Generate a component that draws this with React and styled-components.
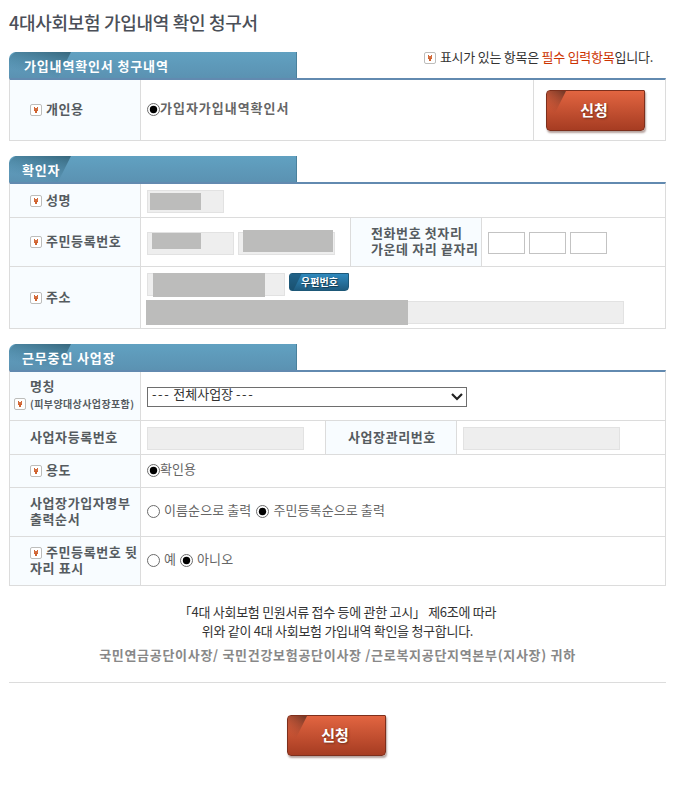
import React, { useState } from 'react';
import styled, { createGlobalStyle, css } from 'styled-components';

function RequiredMark() {
  return (
    <Mark viewBox="0 0 12 12" aria-label="필수">
      <rect x="0.5" y="0.5" width="11" height="11" rx="1.5" fill="#fff" stroke="#bdbdbb" />
      <path d="M4 3H5V4H7V3H8V7H7V9H5V7H4Z" fill="#d0622f" />
      <path d="M4 5H8" stroke="#e39a78" strokeWidth="0.5" />
    </Mark>
  );
}

function SectionHeader({ title, indent }) {
  return (
    <Tab $indent={indent}>
      <TabFold viewBox="0 0 62 26">
        <defs>
          <linearGradient id="tabFold" x1="0.95" y1="0" x2="0.5" y2="0.9">
            <stop offset="0" stopColor="#315f73" stopOpacity="0.85" />
            <stop offset="1" stopColor="#3c7490" stopOpacity="0" />
          </linearGradient>
        </defs>
        <path d="M6 0H62L49 26H0V6Z" fill="url(#tabFold)" />
      </TabFold>
      <TabTitle>{title}</TabTitle>
    </Tab>
  );
}

function SubmitButton() {
  return (
    <RedButton type="button">
      <ButtonFold viewBox="0 0 20 24">
        <defs>
          <linearGradient id="redFold" x1="0.8" y1="0" x2="0.3" y2="0.9">
            <stop offset="0" stopColor="#7a3a28" />
            <stop offset="1" stopColor="#a54830" stopOpacity="0" />
          </linearGradient>
        </defs>
        <path d="M0 0H19L7 24H0Z" fill="url(#redFold)" />
      </ButtonFold>
      <ButtonText>신청</ButtonText>
    </RedButton>
  );
}

function RadioItem({ label, bold, gap, checked, onChange }) {
  return (
    <RadioLabel $gap={gap}>
      <HiddenRadio type="radio" checked={checked} onChange={onChange} />
      <Circle viewBox="0 0 13 13">
        <circle cx="6.5" cy="6.5" r="6" fill="#fff" stroke="#6b6b6b" strokeWidth="1" />
        {checked && <circle cx="6.5" cy="6.5" r="3.7" fill="#000" />}
      </Circle>
      <RadioText $bold={bold}>{label}</RadioText>
    </RadioLabel>
  );
}

function App() {
  const [order, setOrder] = useState('number');
  const [showBack, setShowBack] = useState('no');

  return (
    <Page>
      <GlobalStyle />
      <Top>
        <PageTitle>4대사회보험 가입내역 확인 청구서</PageTitle>
      </Top>

      <Section>
        <HeaderLine>
          <SectionHeader title="가입내역확인서 청구내역" indent={15} />
          <Notice>
            <RequiredMark />
            <NoticeText>
              표시가 있는 항목은 <Red>필수 입력항목</Red>입니다.
            </NoticeText>
          </Notice>
        </HeaderLine>
        <Panel>
          <Row $height={61}>
            <Label>
              <LabelText><RequiredMark />개인용</LabelText>
            </Label>
            <Value>
              <RadioItem label="가입자가입내역확인서" bold checked onChange={() => {}} />
            </Value>
            <ButtonCell>
              <SubmitButton />
            </ButtonCell>
          </Row>
        </Panel>
      </Section>

      <Section>
        <SectionHeader title="확인자" indent={13} />
        <Panel>
          <Row $height={34}>
            <Label>
              <LabelText><RequiredMark />성명</LabelText>
            </Label>
            <FieldValue>
              <Field $width={77}>
                <Mask $left={3} $top={3} $width={51} $height={17} />
              </Field>
            </FieldValue>
          </Row>
          <Row $height={49}>
            <Label>
              <LabelText><RequiredMark />주민등록번호</LabelText>
            </Label>
            <FieldValue $width={209} $gap={4}>
              <Field $width={87}>
                <Mask $left={5} $top={1} $width={49} $height={16} />
              </Field>
              <Field $width={97}>
                <Mask $left={5} $top={-2} $width={90} $height={22} />
              </Field>
            </FieldValue>
            <Label $inner $indent={20}>
              <LabelText>전화번호 첫자리<br />가운데 자리 끝자리</LabelText>
            </Label>
            <FieldValue $gap={4}>
              <PhoneInput />
              <PhoneInput />
              <PhoneInput />
            </FieldValue>
          </Row>
          <Row $height={62}>
            <Label>
              <LabelText><RequiredMark />주소</LabelText>
            </Label>
            <AddressValue>
              <AddressLine>
                <Field $width={138}>
                  <Mask $left={6} $top={0} $width={112} $height={24} />
                </Field>
                <PostcodeButton type="button">
                  <PostcodeFold viewBox="0 0 14 18">
                    <path d="M0 0H13L4 18H0Z" fill="#174965" opacity="0.6" />
                  </PostcodeFold>
                  <PostcodeText>우편번호</PostcodeText>
                </PostcodeButton>
              </AddressLine>
              <Field $width={477}>
                <Mask $left={-1} $top={-1} $width={262} $height={25} />
              </Field>
            </AddressValue>
          </Row>
        </Panel>
      </Section>

      <Section>
        <SectionHeader title="근무중인 사업장" indent={13} />
        <Panel>
          <Row $height={49}>
            <NameLabel>
              <LabelText>명칭</LabelText>
              <SubLine>
                <RequiredMark />
                <SubText>(피부양대상사업장포함)</SubText>
              </SubLine>
            </NameLabel>
            <Value>
              <SelectBox role="listbox" tabIndex={0}>
                <SelectText>
                  <Dashes>---</Dashes> 전체사업장 <Dashes>---</Dashes>
                </SelectText>
                <Arrow viewBox="0 0 12 8">
                  <path d="M1 1L6 6L11 1" fill="none" stroke="#222" strokeWidth="2.2" />
                </Arrow>
              </SelectBox>
            </Value>
          </Row>
          <Row $height={34}>
            <Label>
              <LabelText>사업자등록번호</LabelText>
            </Label>
            <FieldValue $width={184}>
              <Field $width={157} />
            </FieldValue>
            <Label $inner $indent={22}>
              <LabelText>사업장관리번호</LabelText>
            </Label>
            <FieldValue>
              <Field $width={157} />
            </FieldValue>
          </Row>
          <Row $height={33}>
            <Label>
              <LabelText><RequiredMark />용도</LabelText>
            </Label>
            <Value>
              <RadioItem label="확인용" checked onChange={() => {}} />
            </Value>
          </Row>
          <Row $height={49}>
            <Label>
              <LabelText>사업장가입자명부<br />출력순서</LabelText>
            </Label>
            <Value $gap={5}>
              <RadioItem
                label="이름순으로 출력"
                gap={4}
                checked={order === 'name'}
                onChange={() => setOrder('name')}
              />
              <RadioItem
                label="주민등록순으로 출력"
                gap={4}
                checked={order === 'number'}
                onChange={() => setOrder('number')}
              />
            </Value>
          </Row>
          <Row $height={49}>
            <Label>
              <LabelText><RequiredMark />주민등록번호 뒷<br />자리 표시</LabelText>
            </Label>
            <Value $gap={4}>
              <RadioItem
                label="예"
                gap={4}
                checked={showBack === 'yes'}
                onChange={() => setShowBack('yes')}
              />
              <RadioItem
                label="아니오"
                gap={4}
                checked={showBack === 'no'}
                onChange={() => setShowBack('no')}
              />
            </Value>
          </Row>
        </Panel>
      </Section>

      <Closing>
        <ClosingText>「4대 사회보험 민원서류 접수 등에 관한 고시」 제6조에 따라</ClosingText>
        <ClosingText>위와 같이 4대 사회보험 가입내역 확인을 청구합니다.</ClosingText>
        <Receiver>국민연금공단이사장/ 국민건강보험공단이사장 /근로복지공단지역본부(지사장) 귀하</Receiver>
      </Closing>
      <BottomArea>
        <SubmitButton />
      </BottomArea>
    </Page>
  );
}

const GlobalStyle = createGlobalStyle`
  * {
    box-sizing: border-box;
  }

  body {
    margin: 0;
    background: #fff;
    color: #666;
    font-family: 'Noto Sans CJK KR', sans-serif;
    font-size: 13px;
    line-height: 16px;
  }
`;

const Page = styled.div`
  width: 689px;
  height: 785px;
  padding: 0 23px 0 9px;
  overflow: hidden;
  white-space: nowrap;
`;

const Top = styled.header`
  height: 52px;
  padding-top: 10px;
`;

const PageTitle = styled.h1`
  margin: 0;
  color: #4b4f58;
  font-size: 18px;
  font-weight: 500;
  line-height: 24px;
  letter-spacing: -0.3px;
`;

const Section = styled.section`
  margin-bottom: 15px;
`;

const HeaderLine = styled.div`
  display: flex;
  justify-content: space-between;
`;

const Tab = styled.div`
  display: flex;
  position: relative;
  align-items: center;
  width: 288px;
  height: 26px;
  padding: 1px 0 0 ${({ $indent }) => $indent}px;
  overflow: hidden;
  border-right: 1px solid #4a819c;
  border-radius: 7px 0 0 0;
  background: linear-gradient(#61a1c1, #5b92b2);
`;

const TabFold = styled.svg`
  position: absolute;
  top: 0;
  left: 0;
  width: 62px;
  height: 26px;
`;

const TabTitle = styled.h2`
  position: relative;
  margin: 0;
  color: #fff;
  font-size: 13px;
  font-weight: 700;
  letter-spacing: 0.85px;
`;

const Notice = styled.div`
  display: flex;
  align-items: center;
  height: 12px;
  padding-right: 13px;
`;

const NoticeText = styled.span`
  margin-top: -2px;
  color: #333;
  letter-spacing: -0.25px;
`;

const Red = styled.span`
  color: #cc3300;
`;

const Mark = styled.svg`
  flex: none;
  width: 12px;
  height: 12px;
  margin-right: 4px;
  vertical-align: -2px;
`;

const Panel = styled.div`
  border: 1px solid #dcdcdc;
  border-top: 2px solid #628ab0;
  border-bottom: 0;
`;

const Row = styled.div`
  display: flex;
  height: ${({ $height }) => $height}px;
  border-bottom: 1px solid #dcdcdc;
`;

const Label = styled.div`
  display: flex;
  flex: none;
  align-items: center;
  width: 131px;
  padding: 0 0 2px ${({ $indent }) => $indent || 20}px;
  border-right: 1px solid #dcdcdc;
  background: #f8fcff;
  ${({ $inner }) =>
    $inner &&
    css`
      width: 132px;
      border-left: 1px solid #dcdcdc;
    `}
`;

const LabelText = styled.span`
  color: #555b60;
  font-weight: 700;
  letter-spacing: 0.6px;
`;

const NameLabel = styled(Label)`
  flex-direction: column;
  align-items: flex-start;
  padding-top: 6px;
`;

const SubLine = styled.div`
  display: flex;
  align-items: center;
  height: 16px;
  margin: 2px 0 0 -16px;
`;

const SubText = styled.span`
  color: #555b60;
  font-size: 10px;
  font-weight: 700;
  letter-spacing: 0.4px;
`;

const Value = styled.div`
  display: flex;
  flex: ${({ $width }) => ($width ? 'none' : 1)};
  align-items: center;
  gap: ${({ $gap }) => $gap || 0}px;
  width: ${({ $width }) => ($width ? `${$width}px` : 'auto')};
  padding-left: 6px;
`;

const FieldValue = styled(Value)`
  padding-top: 2px;
`;

const AddressValue = styled(Value)`
  flex-direction: column;
  align-items: flex-start;
  justify-content: flex-start;
  gap: 5px;
  padding-top: 6px;
`;

const AddressLine = styled.div`
  display: flex;
  gap: 4px;
`;

const ButtonCell = styled.div`
  display: flex;
  width: 132px;
  padding: 10px 0 0 12px;
  border-left: 1px solid #dcdcdc;
`;

const Field = styled.div`
  position: relative;
  width: ${({ $width }) => $width}px;
  height: 23px;
  border: 1px solid #e2e2e2;
  background: #eee;
`;

// grey block laid over personal data
const Mask = styled.span`
  position: absolute;
  top: ${({ $top }) => $top - 1}px;
  left: ${({ $left }) => $left - 1}px;
  width: ${({ $width }) => $width}px;
  height: ${({ $height }) => $height}px;
  background: #bcbcbb;
`;

const PhoneInput = styled.input`
  width: 37px;
  height: 22px;
  padding: 0;
  border: 1px solid #c3c3c3;
  background: #fff;
`;

const PostcodeButton = styled.button`
  position: relative;
  width: 60px;
  height: 18px;
  padding: 0;
  overflow: hidden;
  border: 1px solid #1d5878;
  border-radius: 3px 0 4px 3px;
  background: linear-gradient(#3089bd, #1f5c80);
`;

const PostcodeFold = styled.svg`
  position: absolute;
  top: -1px;
  left: -1px;
  width: 14px;
  height: 18px;
`;

const PostcodeText = styled.span`
  display: block;
  position: relative;
  padding-left: 1px;
  color: #fff;
  font-family: 'Noto Sans CJK KR', sans-serif;
  font-size: 10px;
  font-weight: 700;
  line-height: 14px;
  text-shadow: 1px 1px 1px #123a50;
`;

const SelectBox = styled.div`
  display: flex;
  align-items: center;
  justify-content: space-between;
  width: 320px;
  height: 20px;
  margin-top: 2px;
  padding: 0 3px 0 4px;
  border: 1px solid #6e6e6e;
  background: #fff;
`;

const SelectText = styled.span`
  margin-top: -7px;
  color: #333;
`;

const Dashes = styled.span`
  letter-spacing: 1.6px;
`;

const Arrow = styled.svg`
  width: 12px;
  height: 8px;
`;

const RadioLabel = styled.label`
  display: flex;
  position: relative;
  align-items: center;
  gap: ${({ $gap }) => $gap || 0}px;
`;

const HiddenRadio = styled.input`
  position: absolute;
  margin: 0;
  opacity: 0;
`;

const Circle = styled.svg`
  flex: none;
  width: 13px;
  height: 13px;
  margin-top: -2px;
`;

const RadioText = styled.span`
  margin-top: -4px;
  color: #666;
  font-weight: ${({ $bold }) => ($bold ? 700 : 400)};
  letter-spacing: ${({ $bold }) => ($bold ? '0.98px' : '0.1px')};
`;

const RedButton = styled.button`
  position: relative;
  width: 99px;
  height: 41px;
  padding: 0;
  overflow: hidden;
  border: 1px solid #7d2f1c;
  border-radius: 4px 1px 4px 4px;
  background: linear-gradient(#e26541, #a63c22);
  box-shadow: 1px 2px 2px rgba(90, 50, 40, 0.45);
`;

const ButtonFold = styled.svg`
  position: absolute;
  top: 0;
  left: 0;
  width: 20px;
  height: 24px;
`;

const ButtonText = styled.span`
  display: block;
  position: relative;
  padding: 0 3px 3px 0;
  color: #fff;
  font-family: 'Noto Sans CJK KR', sans-serif;
  font-size: 15px;
  font-weight: 700;
  line-height: 35px;
  text-shadow: 1px 1px 2px #70301e;
`;

const Closing = styled.div`
  height: 81px;
  padding-top: 1px;
  text-align: center;
`;

const ClosingText = styled.p`
  margin: 0;
  color: #333;
  line-height: 19px;
  letter-spacing: -0.28px;
`;

const Receiver = styled.p`
  margin: 5px 0 0;
  color: #888;
  font-weight: 700;
  line-height: 20px;
  letter-spacing: 0.7px;
`;

const BottomArea = styled.div`
  display: flex;
  padding: 32px 0 0 278px;
  border-top: 1px solid #dcdcdc;
`;

export default App;
